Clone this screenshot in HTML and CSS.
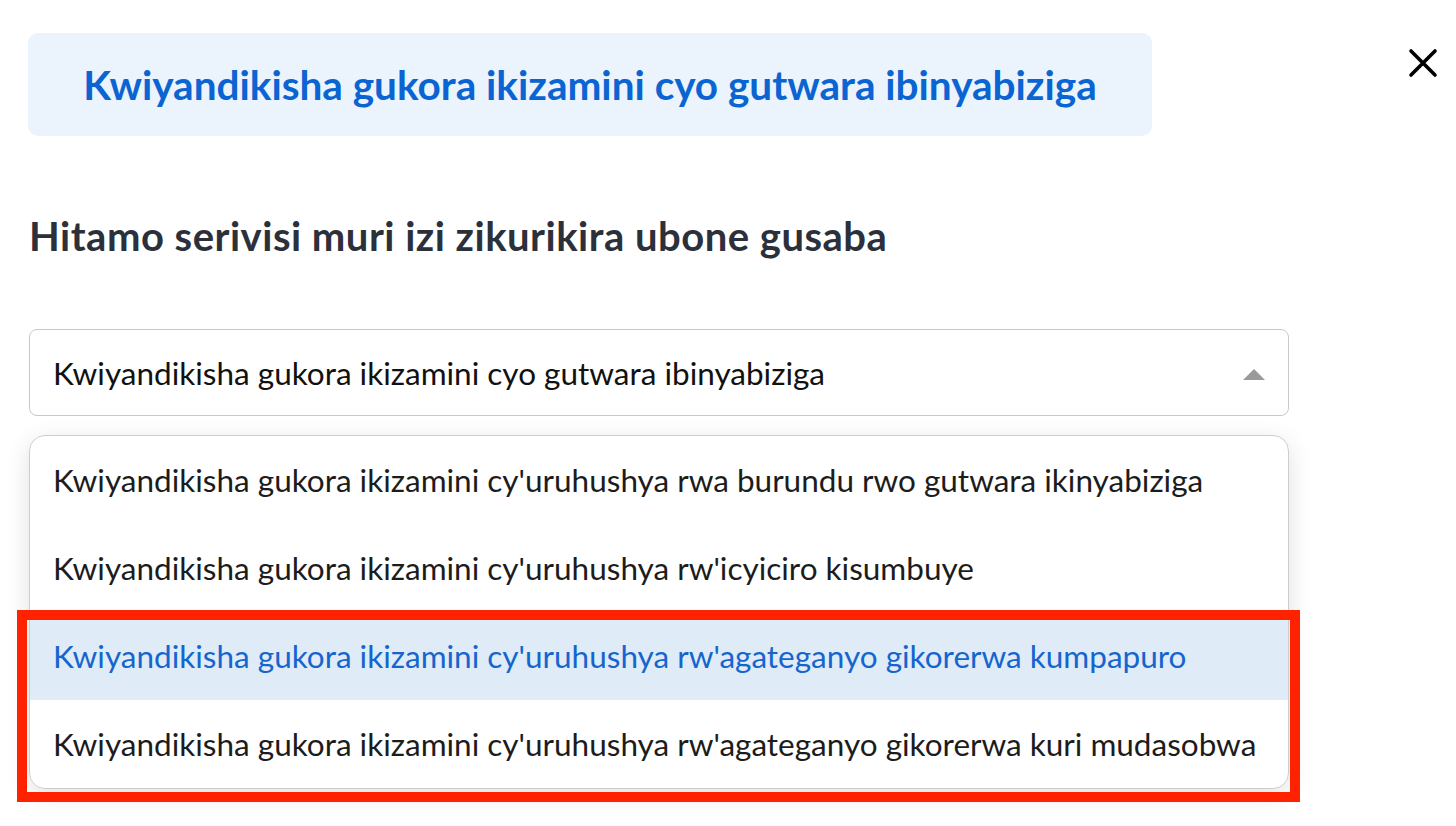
FILE: index.html
```html
<!DOCTYPE html>
<html lang="rw">
<head>
    <meta charset="UTF-8">
    <meta name="viewport" content="width=device-width, initial-scale=1.0">
    <title>Gusaba serivisi</title>
    <link rel="stylesheet" href="styles.css">
</head>
<body>
    <div class="header">
        <div class="title-box">Kwiyandikisha gukora ikizamini cyo gutwara ibinyabiziga</div>
        <button class="close-btn" aria-label="Funga">
            <svg width="30" height="30" viewBox="0 0 30 30">
                <path d="M3 3 L27 27 M27 3 L3 27" stroke="#000" stroke-width="3.6" stroke-linecap="round"/>
            </svg>
        </button>
    </div>

    <h2 class="heading">Hitamo serivisi muri izi zikurikira ubone gusaba</h2>

    <!-- select ifunguye -->
    <div class="select">
        <span class="select-value">Kwiyandikisha gukora ikizamini cyo gutwara ibinyabiziga</span>
        <span class="caret"></span>
    </div>

    <div class="dropdown">
        <div class="option">Kwiyandikisha gukora ikizamini cy'uruhushya rwa burundu rwo gutwara ikinyabiziga</div>
        <div class="option">Kwiyandikisha gukora ikizamini cy'uruhushya rw'icyiciro kisumbuye</div>
        <div class="option active">Kwiyandikisha gukora ikizamini cy'uruhushya rw'agateganyo gikorerwa kumpapuro</div>
        <div class="option">Kwiyandikisha gukora ikizamini cy'uruhushya rw'agateganyo gikorerwa kuri mudasobwa</div>
        <div class="highlight-frame"></div>
    </div>
</body>
</html>
```

FILE: styles.css
```css
html, body {
    min-height: 826px;
}
body {
    margin: 0;
    padding: 33px 18px 40px 28px;
    box-sizing: border-box;
    font-family: Lato, "Noto Sans", sans-serif;
    background: #fff;
    color: #1a1a1a;
}
.header {
    display: flex;
    justify-content: space-between;
    align-items: flex-start;
}
.title-box {
    width: 1124px;
    height: 103px;
    box-sizing: border-box;
    background: #ebf3fc;
    border-radius: 10px;
    display: flex;
    align-items: center;
    justify-content: center;
    color: #0a64d2;
    font-weight: bold;
    font-size: 40.5px;
}
.close-btn {
    background: none;
    border: none;
    padding: 0;
    margin-top: 15px;
    cursor: pointer;
    width: 30px;
    height: 30px;
}
.heading {
    margin: 78px 0 0 1px;
    font-size: 40px;
    letter-spacing: 0.5px;
    font-weight: bold;
    color: #2b303b;
    line-height: 44px;
}
.select {
    margin-top: 71px;
    width: 1260px;
    height: 87px;
    box-sizing: border-box;
    border: 1.5px solid #c9c9c9;
    border-radius: 8px;
    display: flex;
    align-items: center;
    justify-content: space-between;
    padding: 0 23px 0 23px;
    margin-left: 1px;
    font-size: 31.5px;
    color: #111;
}
.caret {
    width: 0;
    height: 0;
    border-left: 11px solid transparent;
    border-right: 11px solid transparent;
    border-bottom: 11px solid #9a9a9a;
    margin-top: 4px;
}
.dropdown {
    position: relative;
    margin: 19px 0 0 1px;
    width: 1260px;
    box-sizing: border-box;
    border: 1.5px solid #cdcdcd;
    border-radius: 16px;
    box-shadow: 0 6px 24px rgba(0, 0, 0, 0.12);
}
.option {
    height: 88px;
    display: flex;
    align-items: center;
    padding-left: 23px;
    font-size: 31.5px;
    color: #1c1c1c;
}
.option:first-child {
    border-radius: 16px 16px 0 0;
}
.option:nth-child(4) {
    border-radius: 0 0 16px 16px;
}
.option.active {
    background: #dfebf6;
    color: #1565cf;
}
.highlight-frame {
    position: absolute;
    left: -13px;
    top: 174px;
    width: 1283px;
    height: 192px;
    box-sizing: border-box;
    border: 10px solid #ff2200;
}
```
